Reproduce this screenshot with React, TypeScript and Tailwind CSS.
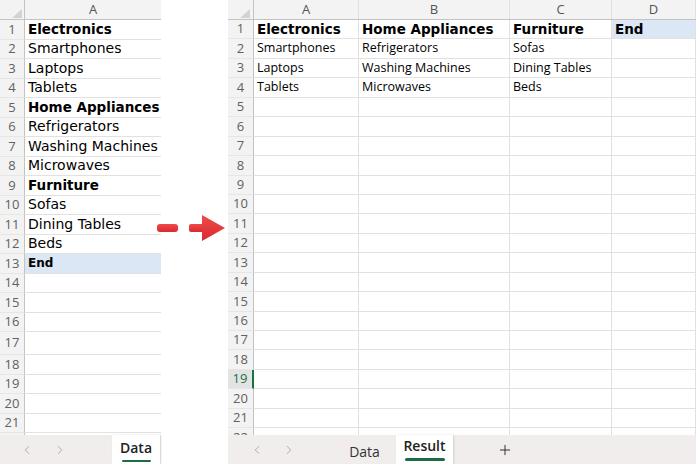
import React from "react";
import { ChevronLeft, ChevronRight, Plus } from "lucide-react";

type Cell = { t: string; b?: boolean; hl?: boolean; small?: boolean };

const leftData: Cell[] = [
  { t: "Electronics", b: true },
  { t: "Smartphones" },
  { t: "Laptops" },
  { t: "Tablets" },
  { t: "Home Appliances", b: true },
  { t: "Refrigerators" },
  { t: "Washing Machines" },
  { t: "Microwaves" },
  { t: "Furniture", b: true },
  { t: "Sofas" },
  { t: "Dining Tables" },
  { t: "Beds" },
  { t: "End", b: true, hl: true, small: true },
];

const rightData: Cell[][] = [
  [
    { t: "Electronics", b: true },
    { t: "Home Appliances", b: true },
    { t: "Furniture", b: true },
    { t: "End", b: true, hl: true },
  ],
  [{ t: "Smartphones" }, { t: "Refrigerators" }, { t: "Sofas" }, { t: "" }],
  [{ t: "Laptops" }, { t: "Washing Machines" }, { t: "Dining Tables" }, { t: "" }],
  [{ t: "Tablets" }, { t: "Microwaves" }, { t: "Beds" }, { t: "" }],
];

const rightWidths = ["w-[105px]", "w-[151px]", "w-[102px]", "flex-1"];
const rightLetters = ["A", "B", "C", "D"];

function Corner() {
  return (
    <svg width="100%" height="100%" className="block">
      <polygon points="12,18 22,18 22,9" fill="#d2d2d2" />
    </svg>
  );
}

function LeftPanel() {
  const rows = Array.from({ length: 22 }, (_, i) => i + 1);
  return (
    <div className="flex flex-col w-[161px] h-[464px] shrink-0">
      <div className="h-[435px] overflow-hidden flex flex-col">
        <div className="flex h-[20px] shrink-0 bg-[#f3f3f3] border-b border-[#c3c3c3]">
          <div className="w-[25px] shrink-0 border-r border-[#c3c3c3]">
            <Corner />
          </div>
          <div className="flex-1 flex items-center justify-center text-[13px] text-[#555] font-['Open_Sans',sans-serif]">
            A
          </div>
        </div>
        {rows.map((r) => {
          const c = leftData[r - 1];
          return (
            <div
              key={r}
              className={
                "flex shrink-0 " + (r === 17 ? "h-[23px]" : "h-[19.5px]")
              }
            >
              <div className="w-[25px] shrink-0 bg-[#f3f3f3] border-r border-[#c3c3c3] border-b border-b-[#e6e6e6] flex items-center justify-center text-[13px] text-[#616161] font-['Open_Sans',sans-serif]">
                {r < 22 ? r : ""}
              </div>
              <div
                className={
                  "flex-1 flex items-center pl-[3px] border-b border-[#e1e1e1] whitespace-nowrap overflow-hidden text-black font-['DejaVu_Sans',sans-serif] " +
                  (c && c.hl ? "bg-[#dce7f5] " : "bg-white ") +
                  (c && c.b
                    ? c.small
                      ? "font-bold text-[12px]"
                      : "font-bold text-[13.5px]"
                    : "text-[14px]")
                }
              >
                {c ? c.t : ""}
              </div>
            </div>
          );
        })}
      </div>
      <div className="h-[29px] flex items-center bg-[#f0edec] pl-[20px]">
        <ChevronLeft size={14} strokeWidth={1.5} color="#a3a3a3" />
        <div className="w-[19px]" />
        <ChevronRight size={14} strokeWidth={1.5} color="#a3a3a3" />
        <div className="ml-auto mr-[1px] w-[48px] h-full bg-white shadow-[1px_0_2px_rgba(0,0,0,0.12)] flex flex-col items-center justify-center">
          <span className="text-[14px] font-semibold text-[#222] font-['Open_Sans',sans-serif] leading-[18px] mt-[2px]">
            Data
          </span>
          <span className="w-[29px] h-[2.5px] rounded-full bg-[#1b6e43] mt-[3px]" />
        </div>
      </div>
    </div>
  );
}

function Arrow() {
  return (
    <div className="w-[67px] shrink-0 flex items-start">
      <svg width="70" height="26" className="mt-[215px] -ml-[5px] shrink-0">
        <defs>
          <linearGradient id="rg" x1="0" y1="0" x2="0" y2="1">
            <stop offset="0" stopColor="#f04a4a" />
            <stop offset="1" stopColor="#d92b30" />
          </linearGradient>
        </defs>
        <rect x="1" y="9" width="21" height="8" rx="3" fill="url(#rg)" />
        <rect x="33" y="9" width="15" height="8" rx="2" fill="url(#rg)" />
        <polygon points="46,0 69,13 46,26" fill="url(#rg)" />
      </svg>
    </div>
  );
}

function RightPanel() {
  const rows = Array.from({ length: 22 }, (_, i) => i + 1);
  return (
    <div className="flex-1 flex flex-col h-[464px] min-w-0">
      <div className="h-[435px] overflow-hidden flex flex-col">
        <div className="flex h-[20px] shrink-0 bg-[#f3f3f3] border-b border-[#c3c3c3]">
          <div className="w-[26px] shrink-0 border-r border-[#c3c3c3]">
            <Corner />
          </div>
          {rightLetters.map((l, i) => (
            <div
              key={l}
              className={
                rightWidths[i] +
                " shrink-0 flex items-center justify-center text-[13px] text-[#555] font-['Open_Sans',sans-serif] border-r border-[#e1e1e1]"
              }
            >
              {l}
            </div>
          ))}
        </div>
        {rows.map((r) => {
          const data = rightData[r - 1];
          const sel = r === 19;
          return (
            <div key={r} className="flex shrink-0 h-[19.45px]">
              <div
                className={
                  "w-[26px] shrink-0 border-b border-b-[#e6e6e6] flex items-center justify-center text-[13px] font-['Open_Sans',sans-serif] " +
                  (sel
                    ? "bg-[#e3e3e3] text-[#17733f] border-r-2 border-r-[#17733f]"
                    : "bg-[#f3f3f3] text-[#616161] border-r border-[#c3c3c3]")
                }
              >
                {r}
              </div>
              {rightWidths.map((w, i) => {
                const c = data ? data[i] : undefined;
                return (
                  <div
                    key={i}
                    className={
                      w +
                      " shrink-0 flex items-center pl-[3px] border-b border-r border-[#e1e1e1] whitespace-nowrap overflow-hidden text-black " +
                      (c && c.hl ? "bg-[#dce7f5] " : "bg-white ") +
                      (c && c.b
                        ? "font-bold text-[13.5px] font-['DejaVu_Sans',sans-serif]"
                        : "text-[12.5px] font-['Open_Sans',sans-serif]")
                    }
                  >
                    {c ? c.t : ""}
                  </div>
                );
              })}
            </div>
          );
        })}
      </div>
      <div className="h-[29px] flex items-center bg-[#f0edec] pl-[22px]">
        <ChevronLeft size={14} strokeWidth={1.5} color="#a3a3a3" />
        <div className="w-[18px]" />
        <ChevronRight size={14} strokeWidth={1.5} color="#a3a3a3" />
        <div className="ml-[42px] w-[53px] h-full flex items-center justify-center">
          <span className="text-[14px] text-[#333] font-['Open_Sans',sans-serif] mt-[4px]">
            Data
          </span>
        </div>
        <div className="ml-[5px] w-[57px] h-full bg-white shadow-[1px_0_2px_rgba(0,0,0,0.12)] flex flex-col items-center justify-center">
          <span className="text-[14px] font-semibold text-[#222] font-['Open_Sans',sans-serif] leading-[18px] -mt-[1px]">
            Result
          </span>
          <span className="w-[40px] h-[2.5px] rounded-full bg-[#1b6e43] mt-[3px]" />
        </div>
        <div className="ml-[44px] flex items-center">
          <Plus size={16} strokeWidth={1.5} color="#333" />
        </div>
      </div>
    </div>
  );
}

export default function App() {
  return (
    <div className="w-[696px] h-[464px] bg-white flex overflow-hidden">
      <LeftPanel />
      <Arrow />
      <RightPanel />
    </div>
  );
}
